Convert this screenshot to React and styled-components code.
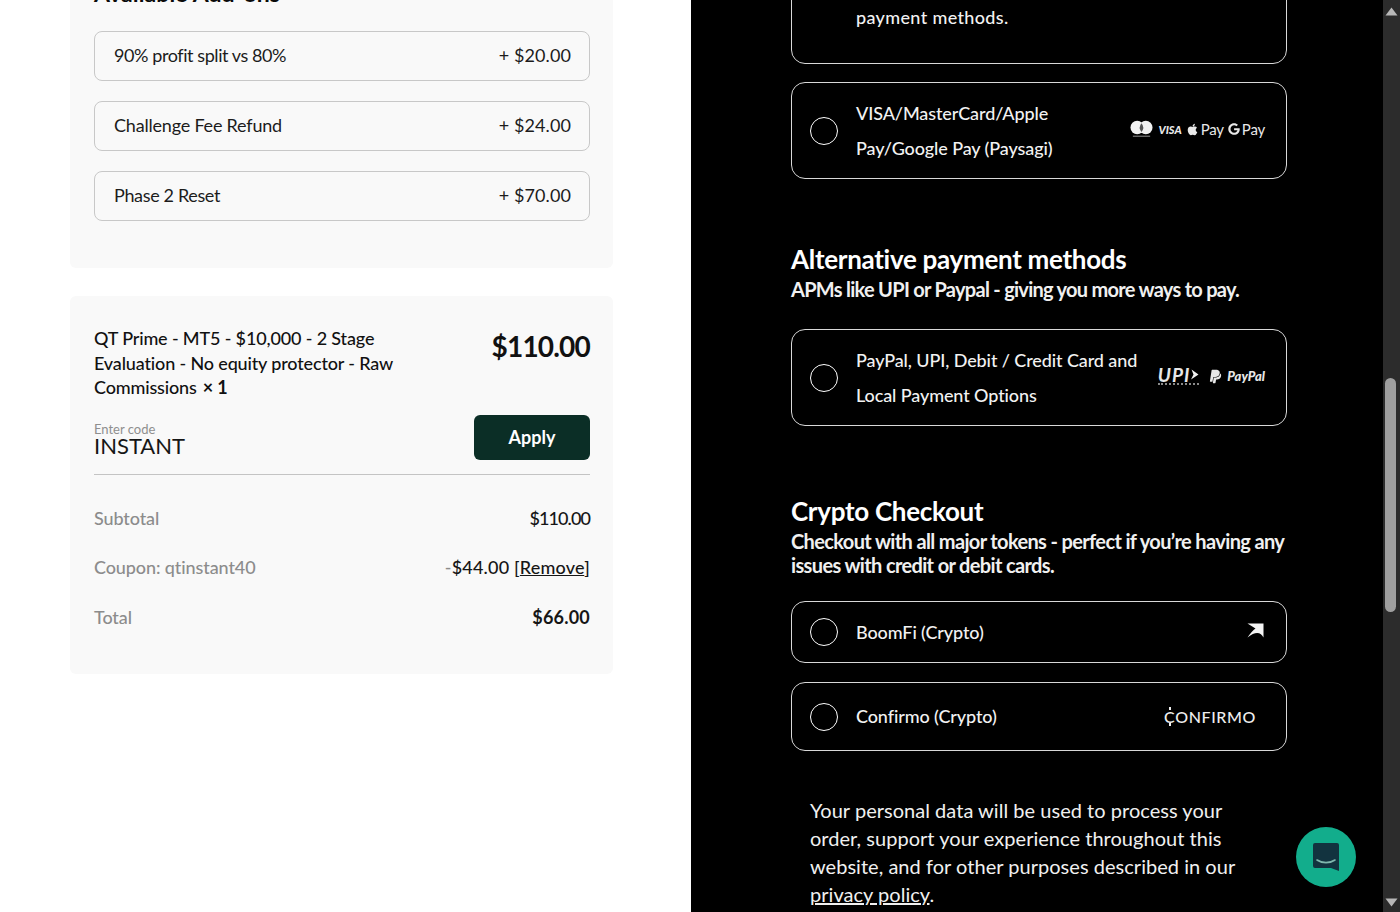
import styled, { createGlobalStyle } from "styled-components";
import { FaApple, FaGoogle, FaPaypal } from "react-icons/fa";

const GlobalStyle = createGlobalStyle`
  html, body {
    margin: 0;
    padding: 0;
    height: 912px;
    overflow: hidden;
    background: #fff;
  }
  * { box-sizing: border-box; }
`;

const Page = styled.div`
  display: flex;
  height: 912px;
  overflow: hidden;
  font-family: "Lato", "Open Sans", sans-serif;
`;

const Summary = styled.div`
  width: 691px;
  padding-left: 70px;
  background: #fff;
  color: #111;
`;

const Panel = styled.section`
  width: 543px;
  background: #f9f9f9;
  border-radius: 6px;
  padding: ${(p) => p.$padding};
  margin-top: ${(p) => p.$top};
`;

const PanelTitle = styled.h3`
  margin: 0 0 24px;
  font-size: 23px;
  line-height: 28px;
  font-weight: 700;
  letter-spacing: 0.1px;
  color: #0a0a0a;
`;

const AddOnList = styled.div`
  display: flex;
  flex-direction: column;
  gap: 20px;
`;

const AddOn = styled.div`
  display: flex;
  justify-content: space-between;
  align-items: center;
  height: 50px;
  padding: 0 18px 3px 19px;
  border: 1px solid #c8c8c8;
  border-radius: 8px;
  font-size: 18px;
  color: #1c1c1c;
`;

const AddOnName = styled.span`
  letter-spacing: ${(p) => p.$spacing || "-0.2px"};
`;

const AddOnPrice = styled.span`
  letter-spacing: 0.1px;
`;

const ProductRow = styled.div`
  display: flex;
  justify-content: space-between;
  align-items: flex-start;
`;

const ProductName = styled.div`
  width: 310px;
  font-size: 18px;
  font-weight: 500;
  line-height: 24.5px;
  letter-spacing: -0.15px;
  margin-top: -1px;
`;

const Qty = styled.strong`
  font-weight: 700;
  margin-left: 6px;
`;

const ProductPrice = styled.div`
  font-size: 28px;
  line-height: 38px;
  font-weight: 700;
  letter-spacing: -0.8px;
`;

const CouponRow = styled.div`
  display: flex;
  justify-content: space-between;
  align-items: flex-start;
  margin-top: 15px;
  padding-bottom: 14px;
  border-bottom: 1px solid #c4c4c4;
`;

const CouponField = styled.div`
  padding-top: 8px;
  display: flex;
  flex-direction: column;
`;

const CouponLabel = styled.span`
  font-size: 13px;
  line-height: 13px;
  color: #8f8f8f;
`;

const CouponValue = styled.span`
  font-size: 22px;
  line-height: 20px;
  color: #161616;
`;

const ApplyButton = styled.button`
  width: 116px;
  height: 45px;
  border: 0;
  border-radius: 6px;
  background: #0b2e26;
  color: #fff;
  font-family: inherit;
  font-size: 18px;
  font-weight: 700;
`;

const Totals = styled.div`
  display: flex;
  flex-direction: column;
  gap: 24.4px;
  margin-top: 31px;
`;

const TotalRow = styled.div`
  display: flex;
  justify-content: space-between;
  align-items: center;
  height: 25px;
  font-size: 18px;
`;

const TotalLabel = styled.span`
  color: #8c8c8c;
  font-weight: 500;
  letter-spacing: -0.1px;
`;

const TotalValue = styled.span`
  color: #161616;
  font-weight: ${(p) => (p.$bold ? 700 : 500)};
  letter-spacing: ${(p) => p.$spacing || "0.2px"};
`;

const RemoveLink = styled.span`
  text-decoration: underline;
`;

const Minus = styled.span`
  color: #8c8c8c;
`;

const Checkout = styled.div`
  flex: 1;
  background: #000;
  color: #fff;
  padding-left: 100px;
  min-width: 0;
`;

const CheckoutInner = styled.div`
  width: 496px;
  margin-top: -40px;
`;

const MethodCard = styled.label`
  display: flex;
  align-items: center;
  justify-content: space-between;
  min-height: ${(p) => p.$height}px;
  margin-top: ${(p) => p.$top || 0}px;
  padding: 0 21px 0 18px;
  border: 1px solid #d8d8d8;
  border-radius: 14px;
`;

const TailCard = styled(MethodCard)`
  align-items: flex-end;
  padding-left: 64px;
  padding-bottom: 28px;
`;

const MethodMain = styled.div`
  display: flex;
  align-items: center;
  gap: 18px;
`;

const Radio = styled.span`
  flex: none;
  width: 28px;
  height: 28px;
  border: 1px solid #fff;
  border-radius: 50%;
`;

const MethodText = styled.div`
  font-size: 18px;
  font-weight: 500;
  line-height: 35px;
  letter-spacing: -0.1px;
  color: #f2f2f2;
`;

const TailText = styled(MethodText)`
  letter-spacing: 0.35px;
`;

const Logos = styled.div`
  display: flex;
  align-items: center;
  gap: ${(p) => p.$gap || 4}px;
  color: #e8e8e8;
  margin-top: -3px;
`;

const VisaMark = styled.span`
  font-size: 11px;
  font-weight: 900;
  font-style: italic;
  margin-left: 1px;
`;

const PayMark = styled.span`
  display: inline-flex;
  align-items: center;
  gap: 2px;
  font-size: 15px;
  letter-spacing: -0.2px;
`;

const UpiMark = styled.span`
  display: inline-flex;
  align-items: center;
  gap: 0;
  padding-bottom: 2px;
  border-bottom: 2px dotted #8a8a8a;
  font-size: 19px;
  line-height: 13px;
  font-style: italic;
  font-weight: 700;
  letter-spacing: 1px;
`;

const PaypalMark = styled.span`
  display: inline-flex;
  align-items: center;
  gap: 4px;
  font-size: 13px;
  font-weight: 900;
  font-style: italic;
`;

const ConfirmoMark = styled.span`
  font-size: 16px;
  font-weight: 500;
  letter-spacing: 0.6px;
  color: #eee;
  margin-right: 9px;
`;

const ConfirmoC = styled.span`
  position: relative;
  &::before,
  &::after {
    content: "";
    position: absolute;
    left: 5px;
    width: 1.5px;
    height: 3px;
    background: #eee;
  }
  &::before {
    top: 0;
  }
  &::after {
    bottom: 0;
  }
`;

const BoomfiWrap = styled.span`
  display: flex;
  margin-right: 1px;
  margin-top: -3px;
`;

const SectionHead = styled.h2`
  margin: ${(p) => p.$top}px 0 0;
  font-size: 26px;
  line-height: 35px;
  font-weight: 700;
  letter-spacing: -0.3px;
`;

const SectionText = styled.p`
  margin: 0 0 ${(p) => p.$bottom}px;
  font-size: 20px;
  line-height: 24.5px;
  font-weight: 700;
  letter-spacing: ${(p) => p.$spacing};
  color: #f0f0f0;
`;

const Consent = styled.p`
  margin: 45px 0 0;
  padding-left: 19px;
  font-size: 20px;
  line-height: 28px;
  letter-spacing: 0.03px;
  color: #f0f0f0;
`;

const PolicyLink = styled.span`
  text-decoration: underline;
`;

const ScrollTrack = styled.div`
  position: fixed;
  top: 0;
  right: 0;
  width: 17px;
  height: 912px;
  display: flex;
  flex-direction: column;
  align-items: center;
  justify-content: space-between;
  padding: 7px 0 5px;
  background: #2c2c2c;
`;

const ScrollThumb = styled.div`
  position: absolute;
  left: 2px;
  top: 378px;
  width: 11px;
  height: 234px;
  border-radius: 6px;
  background: #9f9f9f;
`;

const ChatBubble = styled.button`
  position: fixed;
  left: 1296px;
  top: 827px;
  width: 60px;
  height: 60px;
  display: flex;
  align-items: center;
  justify-content: center;
  border: 0;
  border-radius: 50%;
  background: #12ad8c;
`;

const Arrow = ({ down }) => (
  <svg width="13" height="9" viewBox="0 0 13 9">
    <path d={down ? "M0.5 0.5h12L6.5 8.5z" : "M6.5 0.5l6 8H0.5z"} fill="#b8b8b8" />
  </svg>
);

const MastercardIcon = () => (
  <svg width="23" height="18" viewBox="0 0 24 18">
    <circle cx="7.5" cy="7.5" r="7" fill="#f2f2f2" />
    <circle cx="16.5" cy="7.5" r="7" fill="#f2f2f2" />
    <path d="M12 3a7 7 0 0 1 0 9a7 7 0 0 1 0-9z" fill="#555" />
    <rect x="3" y="16" width="18" height="1" fill="#999" />
  </svg>
);

const UpiArrow = () => (
  <svg width="9" height="11" viewBox="0 0 9 11">
    <path d="M1.5 0.5L8.5 5.5L1 10.5L3.5 5.5z" fill="#f2f2f2" />
  </svg>
);

const BoomfiIcon = () => (
  <svg width="17" height="15" viewBox="0 0 17 15">
    <path d="M0.5 0.5H16.5V14.5C14 9.5 9 7.5 0.5 14.5C3.5 10.5 6 7 8.5 5.5Z" fill="#f4f4f4" />
  </svg>
);

const ChatIcon = () => (
  <svg width="28" height="30" viewBox="0 0 28 30">
    <path d="M3 1H25a2 2 0 0 1 2 2V29L19 26H3a2 2 0 0 1-2-2V3a2 2 0 0 1 2-2z" fill="#12333f" />
    <path d="M5 18c5 3.5 13 3.5 18 0" fill="none" stroke="#7fb7ad" strokeWidth="1.6" strokeLinecap="round" />
  </svg>
);

const App = () => {
  return (
    <>
      <GlobalStyle />
      <Page>
        <Summary>
          <Panel $top="-21px" $padding="0 23px 47px 24px">
            <PanelTitle>Available Add-ons</PanelTitle>
            <AddOnList>
              <AddOn>
                <AddOnName $spacing="-0.42px">90% profit split vs 80%</AddOnName>
                <AddOnPrice>+ $20.00</AddOnPrice>
              </AddOn>
              <AddOn>
                <AddOnName>Challenge Fee Refund</AddOnName>
                <AddOnPrice>+ $24.00</AddOnPrice>
              </AddOn>
              <AddOn>
                <AddOnName $spacing="-0.35px">Phase 2 Reset</AddOnName>
                <AddOnPrice>+ $70.00</AddOnPrice>
              </AddOn>
            </AddOnList>
          </Panel>

          <Panel $top="28px" $padding="31px 23px 45px 24px">
            <ProductRow>
              <ProductName>
                QT Prime - MT5 - $10,000 - 2 Stage Evaluation - No equity protector - Raw Commissions
                <Qty>× 1</Qty>
              </ProductName>
              <ProductPrice>$110.00</ProductPrice>
            </ProductRow>
            <CouponRow>
              <CouponField>
                <CouponLabel>Enter code</CouponLabel>
                <CouponValue>INSTANT</CouponValue>
              </CouponField>
              <ApplyButton>Apply</ApplyButton>
            </CouponRow>
            <Totals>
              <TotalRow>
                <TotalLabel>Subtotal</TotalLabel>
                <TotalValue $spacing="-0.9px">$110.00</TotalValue>
              </TotalRow>
              <TotalRow>
                <TotalLabel>Coupon: qtinstant40</TotalLabel>
                <TotalValue>
                  <Minus>-</Minus>$44.00 [<RemoveLink>Remove</RemoveLink>]
                </TotalValue>
              </TotalRow>
              <TotalRow>
                <TotalLabel>Total</TotalLabel>
                <TotalValue $bold>$66.00</TotalValue>
              </TotalRow>
            </Totals>
          </Panel>
        </Summary>

        <Checkout>
          <CheckoutInner>
            <TailCard $height={104}>
              <TailText>payment methods.</TailText>
            </TailCard>

            <MethodCard $height={97} $top={18}>
              <MethodMain>
                <Radio />
                <MethodText>
                  VISA/MasterCard/Apple
                  <br />
                  Pay/Google Pay (Paysagi)
                </MethodText>
              </MethodMain>
              <Logos>
                <MastercardIcon />
                <VisaMark>VISA</VisaMark>
                <PayMark>
                  <FaApple size={13} />
                  Pay
                </PayMark>
                <PayMark>
                  <FaGoogle size={12} />
                  Pay
                </PayMark>
              </Logos>
            </MethodCard>

            <SectionHead $top={63}>Alternative payment methods</SectionHead>
            <SectionText $bottom={27.5} $spacing="-0.72px">
              APMs like UPI or Paypal - giving you more ways to pay.
            </SectionText>

            <MethodCard $height={97}>
              <MethodMain>
                <Radio />
                <MethodText>
                  PayPal, UPI, Debit / Credit Card and
                  <br />
                  Local Payment Options
                </MethodText>
              </MethodMain>
              <Logos $gap={9}>
                <UpiMark>
                  UPI
                  <UpiArrow />
                </UpiMark>
                <PaypalMark>
                  <FaPaypal size={15} />
                  PayPal
                </PaypalMark>
              </Logos>
            </MethodCard>

            <SectionHead $top={67.5}>Crypto Checkout</SectionHead>
            <SectionText $bottom={23.5} $spacing="-0.64px">
              Checkout with all major tokens - perfect if you’re having any
              <br />
              issues with credit or debit cards.
            </SectionText>

            <MethodCard $height={62}>
              <MethodMain>
                <Radio />
                <MethodText>BoomFi (Crypto)</MethodText>
              </MethodMain>
              <BoomfiWrap>
                <BoomfiIcon />
              </BoomfiWrap>
            </MethodCard>

            <MethodCard $height={69} $top={19}>
              <MethodMain>
                <Radio />
                <MethodText>Confirmo (Crypto)</MethodText>
              </MethodMain>
              <ConfirmoMark>
                <ConfirmoC>C</ConfirmoC>ONFIRMO
              </ConfirmoMark>
            </MethodCard>

            <Consent>
              Your personal data will be used to process your
              <br />
              order, support your experience throughout this
              <br />
              website, and for other purposes described in our
              <br />
              <PolicyLink>privacy policy</PolicyLink>.
            </Consent>
          </CheckoutInner>
        </Checkout>
      </Page>

      <ScrollTrack>
        <Arrow />
        <ScrollThumb />
        <Arrow down />
      </ScrollTrack>
      <ChatBubble aria-label="Chat">
        <ChatIcon />
      </ChatBubble>
    </>
  );
};

export default App;
